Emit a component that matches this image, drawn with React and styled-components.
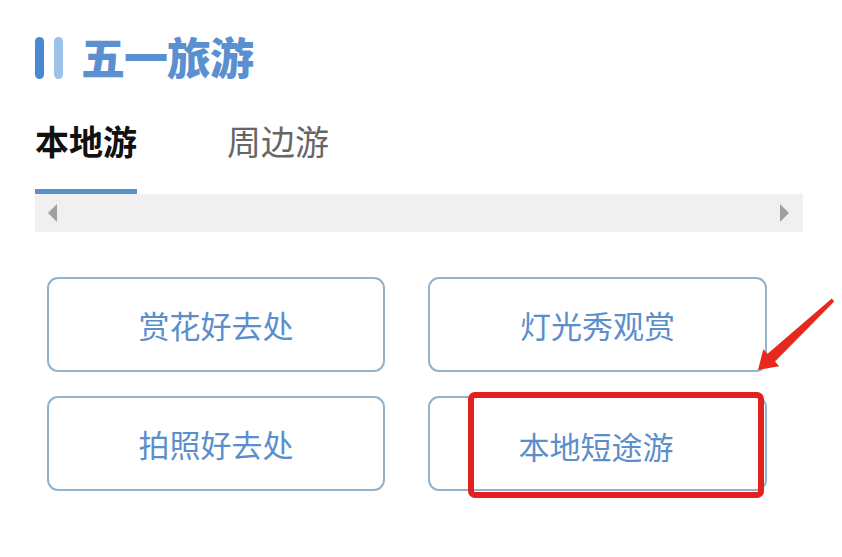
import React from "react";
import styled, { createGlobalStyle } from "styled-components";

const Global = createGlobalStyle`
  html, body { margin: 0; padding: 0; background: #ffffff; }
  body { font-family: "Noto Sans CJK SC", "Noto Sans", sans-serif; }
`;

const Page = styled.div`
  position: relative;
  width: 842px;
  height: 557px;
  padding: 31px 0 0 35px;
  box-sizing: border-box;
  overflow: hidden;
`;

const Header = styled.div`
  display: flex;
  align-items: center;
  gap: 18px;
  height: 50px;
`;

const Bars = styled.div`
  display: flex;
  gap: 10px;
  align-items: center;
  padding-top: 4px;
`;

const Bar = styled.span`
  display: block;
  width: 9px;
  height: 42px;
  border-radius: 5px;
  background: ${(p) => p.$color};
`;

const Title = styled.h1`
  margin: 0;
  font-size: 44px;
  font-weight: 900;
  color: #5a8fd0;
  line-height: 50px;
  letter-spacing: -1px;
`;

const Tabs = styled.div`
  display: flex;
  gap: 90px;
  margin-top: 36px;
  width: 768px;
`;

const Tab = styled.div`
  display: flex;
  flex-direction: column;
  font-size: 34px;
  line-height: 48px;
  font-weight: ${(p) => (p.$active ? 700 : 400)};
  color: ${(p) => (p.$active ? "#111111" : "#666666")};
  &::after {
    content: "";
    display: block;
    margin-top: 24px;
    height: 5px;
    background: ${(p) => (p.$active ? "#5b8fcc" : "transparent")};
  }
`;

const ScrollBar = styled.div`
  width: 768px;
  height: 38px;
  background: #f0f0f0;
  display: flex;
  align-items: center;
  justify-content: space-between;
  padding: 0 14px 0 13px;
  box-sizing: border-box;
`;

const Arrow = styled.span`
  width: 0;
  height: 0;
  border-top: 9px solid transparent;
  border-bottom: 9px solid transparent;
  ${(p) =>
    p.$dir === "left"
      ? "border-right: 9px solid #a0a0a0;"
      : "border-left: 9px solid #a0a0a0;"}
`;

const Grid = styled.div`
  display: grid;
  grid-template-columns: 338px 339px;
  grid-auto-rows: 95px;
  column-gap: 43px;
  row-gap: 24px;
  margin: 45px 0 0 12px;
`;

const Option = styled.div`
  position: relative;
  box-sizing: border-box;
  border: 2px solid #93b2cc;
  border-radius: 11px;
  display: flex;
  align-items: center;
  justify-content: center;
  font-size: 31px;
  color: #5b8fcc;
`;

const Highlight = styled.div`
  position: absolute;
  left: 38px;
  top: -6px;
  width: 296px;
  height: 106px;
  box-sizing: border-box;
  border: 6px solid #e3211f;
  border-radius: 7px;
  display: flex;
  align-items: center;
  justify-content: center;
  padding-right: 40px;
`;

const Pointer = styled.svg`
  position: absolute;
  left: 750px;
  top: 292px;
`;

const options = ["赏花好去处", "灯光秀观赏", "拍照好去处", "本地短途游"];

export default function App() {
  return (
    <>
      <Global />
      <Page>
        <Header>
          <Bars>
            <Bar $color="#4a88d0" />
            <Bar $color="#9cc2ea" />
          </Bars>
          <Title>五一旅游</Title>
        </Header>
        <Tabs>
          <Tab $active>本地游</Tab>
          <Tab>周边游</Tab>
        </Tabs>
        <ScrollBar>
          <Arrow $dir="left" />
          <Arrow $dir="right" />
        </ScrollBar>
        <Grid>
          {options.map((o, i) =>
            i === 3 ? (
              <Option key={o}>
                <Highlight>{o}</Highlight>
              </Option>
            ) : (
              <Option key={o}>{o}</Option>
            )
          )}
        </Grid>
        <Pointer width="92" height="84" viewBox="0 0 92 84">
          <polygon
            points="81.8,6.6 84.2,9.4 25,69.6 29.2,74.2 8,78 13.3,57.2 17.6,61.8"
            fill="#e8281f"
          />
        </Pointer>
      </Page>
    </>
  );
}
